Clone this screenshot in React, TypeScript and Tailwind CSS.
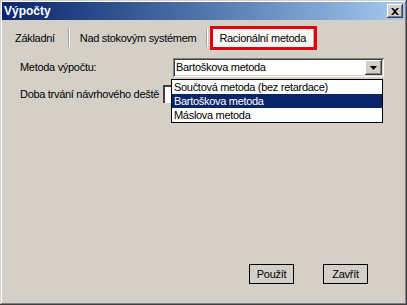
import React from "react";

const font = { fontFamily: '"Liberation Sans", Arial, sans-serif' };

const Tab = ({ label, selected }: { label: string; selected?: boolean }) => {
  if (selected) {
    return (
      <div className="ml-[2px] h-[24px] w-[107px] border-[3px] border-[#e3000f] flex">
        <div className="flex-1 bg-[#f7f6f3] border-r border-[#b8b4ac] flex items-center pl-[6px] pt-[1px] text-[11px] text-black">
          {label}
        </div>
      </div>
    );
  }
  return <div className="h-[24px] flex items-center text-[11px] text-black">{label}</div>;
};

const Sep = () => (
  <div className="h-[19px] mb-[3px] w-[2px] border-l border-[#a9a59d] bg-white self-end" />
);

const App = () => {
  return (
    <div
      className="w-[407px] h-[305px] bg-[#d4d0c8] flex flex-col p-[2px] tracking-[-0.3px] shadow-[inset_-1px_-1px_#404040,inset_1px_1px_#d4d0c8,inset_-2px_-2px_#808080,inset_2px_2px_#ffffff] overflow-hidden"
      style={font}
    >
      {/* title bar */}
      <div className="h-[18px] flex items-center justify-between bg-gradient-to-r from-[#0a246a] to-[#a6caf0] pl-[2px] pr-[2px]">
        <span className="text-white font-bold text-[12px] leading-none tracking-normal">Výpočty</span>
        <div className="w-[16px] h-[14px] bg-[#d4d0c8] flex items-center justify-center shadow-[inset_-1px_-1px_#404040,inset_1px_1px_#ffffff,inset_-2px_-2px_#808080]">
          <svg width="8" height="7" viewBox="0 0 8 7">
            <path d="M0 0 L2 0 L4 2 L6 0 L8 0 L5 3.5 L8 7 L6 7 L4 5 L2 7 L0 7 L3 3.5 Z" fill="#000" />
          </svg>
        </div>
      </div>

      {/* tabs */}
      <div className="h-[30px] flex items-end pl-[13px]">
        <div className="flex items-end">
          <div className="pr-[13px]">
            <Tab label="Základní" />
          </div>
          <Sep />
          <div className="pl-[10px] pr-[10px]">
            <Tab label="Nad stokovým systémem" />
          </div>
          <Sep />
          <Tab label="Racionální metoda" selected />
        </div>
      </div>

      {/* panel */}
      <div className="flex-1 relative flex flex-col pl-[18px] pr-[21px] pt-[8px] text-[11px] text-black">
        <div className="flex items-center justify-between h-[19px]">
          <span>Metoda výpočtu:</span>
          <div className="w-[211px] h-[19px] bg-white flex items-center justify-between pl-[2px] shadow-[inset_1px_1px_#808080,inset_-1px_-1px_#ffffff,inset_2px_2px_#404040,inset_-2px_-2px_#d4d0c8]">
            <span className="pl-[1px]">Bartoškova metoda</span>
            <div className="w-[17px] h-[15px] mr-[2px] bg-[#d4d0c8] flex items-center justify-center shadow-[inset_-1px_-1px_#404040,inset_1px_1px_#ffffff,inset_-2px_-2px_#808080]">
              <svg width="7" height="4" viewBox="0 0 7 4">
                <path d="M0 0 L7 0 L3.5 4 Z" fill="#000" />
              </svg>
            </div>
          </div>
        </div>

        <div className="flex items-center h-[18px] mt-[8px]">
          <span>Doba trvání návrhového deště</span>
          <div className="ml-[4px] w-[60px] h-[18px] bg-white border-l-2 border-t-2 border-[#404040]" />
        </div>

        {/* open list */}
        <div className="absolute left-[169px] top-[29px] w-[212px] bg-white border border-black flex flex-col">
          <div className="h-[14px] leading-[14px] pl-[2px]">Součtová metoda (bez retardace)</div>
          <div className="h-[14px] leading-[14px] pl-[2px] bg-[#0a246a] text-white">Bartoškova metoda</div>
          <div className="h-[14px] leading-[14px] pl-[2px]">Máslova metoda</div>
        </div>

        <div className="mt-auto mb-[19px] flex justify-end gap-[29px] pr-[16px]">
          <button className="w-[45px] h-[20px] border border-black bg-[#d4d0c8] text-[11px]">Použít</button>
          <button className="w-[45px] h-[20px] border border-black bg-[#d4d0c8] text-[11px]">Zavřít</button>
        </div>
      </div>
    </div>
  );
};

export default App;
